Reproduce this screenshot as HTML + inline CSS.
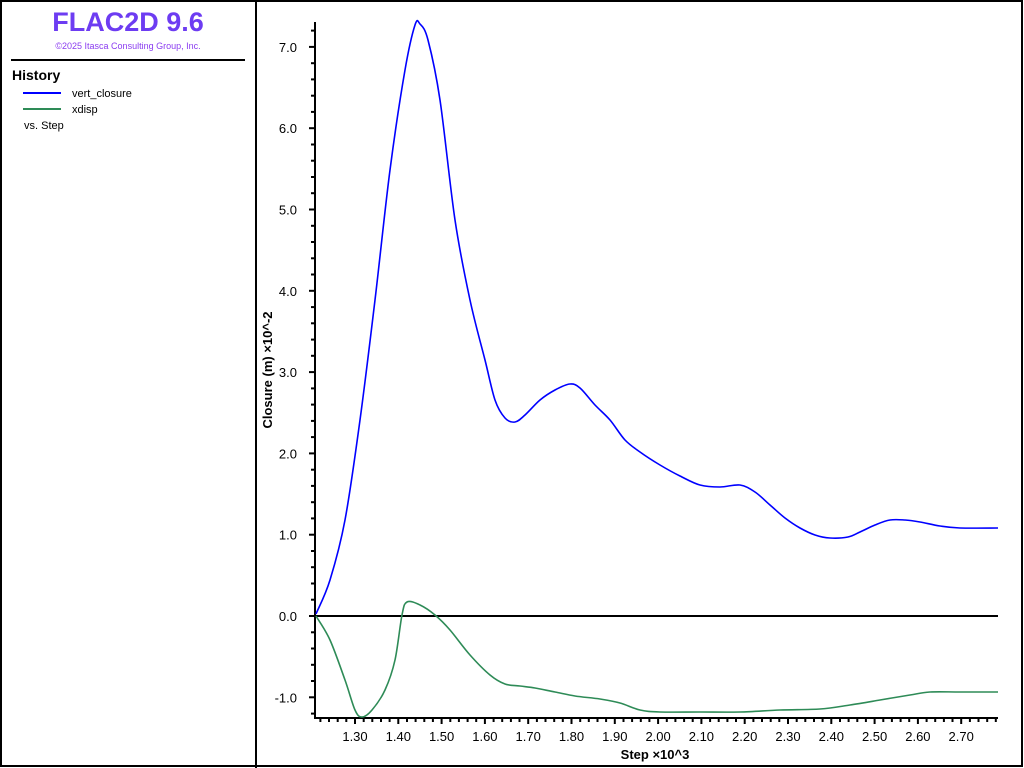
<!DOCTYPE html>
<html><head><meta charset="utf-8"><style>
html,body{margin:0;padding:0;background:#fff;}
body{width:1024px;height:768px;position:relative;overflow:hidden;font-family:"Liberation Sans",sans-serif;}
</style></head><body>
<svg id="s" width="1024" height="768" xmlns="http://www.w3.org/2000/svg" style="position:absolute;left:0;top:0">
<rect x="1" y="1" width="1021" height="765" fill="none" stroke="#000" stroke-width="2"/>
<line x1="256" y1="0" x2="256" y2="768" stroke="#000" stroke-width="2"/>
<text x="128" y="31" text-anchor="middle" font-size="27" font-weight="bold" fill="#6d3cf2" font-family="Liberation Sans">FLAC2D 9.6</text>
<text x="128" y="49" text-anchor="middle" font-size="9" fill="#8a3cf0">©2025 Itasca Consulting Group, Inc.</text>
<line x1="11" y1="60" x2="245" y2="60" stroke="#000" stroke-width="2"/>
<text x="12" y="80" font-size="14" font-weight="bold">History</text>
<line x1="23" y1="93" x2="61" y2="93" stroke="#0000ff" stroke-width="2"/>
<text x="72" y="97" font-size="11">vert_closure</text>
<line x1="23" y1="109" x2="61" y2="109" stroke="#2e8b57" stroke-width="2"/>
<text x="72" y="113" font-size="11">xdisp</text>
<text x="24" y="129" font-size="11">vs. Step</text>
<g id="ax"></g>
<line x1="316" y1="616" x2="998" y2="616" stroke="#000" stroke-width="2"/>
<path id="pb" fill="none" stroke="#0000ff" stroke-width="1.6"/>
<path id="pg" fill="none" stroke="#2e8b57" stroke-width="1.6"/>
<text x="655" y="759" text-anchor="middle" font-size="13" font-weight="bold">Step ×10^3</text>
<text transform="translate(272,370) rotate(-90)" text-anchor="middle" font-size="13" font-weight="bold">Closure (m)  ×10^-2</text>
</svg>
<script>
var g=document.getElementById('ax'),h='';
h+='<line x1="315" y1="22" x2="315" y2="719" stroke="#000" stroke-width="2"/>';
h+='<line x1="314" y1="718" x2="998" y2="718" stroke="#000" stroke-width="2"/>';
for(var v=-1.2;v<=7.41;v+=0.2){var y=616-v*81.3;if(y<22)continue;var maj=Math.abs(Math.round(v)-v)<0.01;
h+='<line x1="'+(maj?309:311)+'" y1="'+y.toFixed(1)+'" x2="315" y2="'+y.toFixed(1)+'" stroke="#000" stroke-width="2"/>';
if(maj)h+='<text x="297" y="'+(y+5).toFixed(1)+'" text-anchor="end" font-size="13">'+Math.round(v).toFixed(1)+'</text>';}
for(var i=0;i<100;i++){var s=1.22+i*0.02;var x=355+(s-1.30)*433;if(x>998)break;var maj=(i%5==4);
h+='<line x1="'+x.toFixed(1)+'" y1="718" x2="'+x.toFixed(1)+'" y2="'+(maj?724:722)+'" stroke="#000" stroke-width="2"/>';
if(maj)h+='<text x="'+x.toFixed(1)+'" y="741" text-anchor="middle" font-size="13">'+(s).toFixed(2)+'</text>';}
g.innerHTML=h;
function cr(p){var d='M'+p[0][0]+','+p[0][1];for(var i=0;i<p.length-1;i++){var a=p[i-1]||p[i],b=p[i],c=p[i+1],e=p[i+2]||c;
d+=' C'+(b[0]+(c[0]-a[0])/6).toFixed(1)+','+(b[1]+(c[1]-a[1])/6).toFixed(1)+' '+(c[0]-(e[0]-b[0])/6).toFixed(1)+','+(c[1]-(e[1]-b[1])/6).toFixed(1)+' '+c[0]+','+c[1];}return d;}
var B=[[316,614],[330,580],[345,520],[360,420],[375,300],[390,170],[405,70],[415,25],[420,24],[428,40],[440,100],[455,220],[470,300],[485,360],[495,400],[505,418],[515,422],[525,415],[540,400],[555,390],[570,384],[580,388],[595,405],[610,420],[625,440],[640,452],[660,465],[680,476],[700,485],[720,487],[740,485],[755,492],[770,505],[785,518],[800,528],[815,535],[830,538],[848,537],[860,532],[875,525],[890,520],[905,520],[920,522],[940,526],[960,528],[998,528]];
var G=[[316,616],[330,640],[345,680],[355,710],[362,717],[372,710],[385,690],[395,660],[402,615],[407,602],[420,605],[435,615],[450,630],[470,655],[490,675],[505,684],[520,686],[535,688],[555,692],[575,696],[600,699],[620,703],[640,710],[660,712],[700,712],[740,712],[780,710],[820,709],[850,705],[880,700],[910,695],[930,692],[960,692],[998,692]];
document.getElementById('pb').setAttribute('d',cr(B));
document.getElementById('pg').setAttribute('d',cr(G));
</script>
</body></html>
